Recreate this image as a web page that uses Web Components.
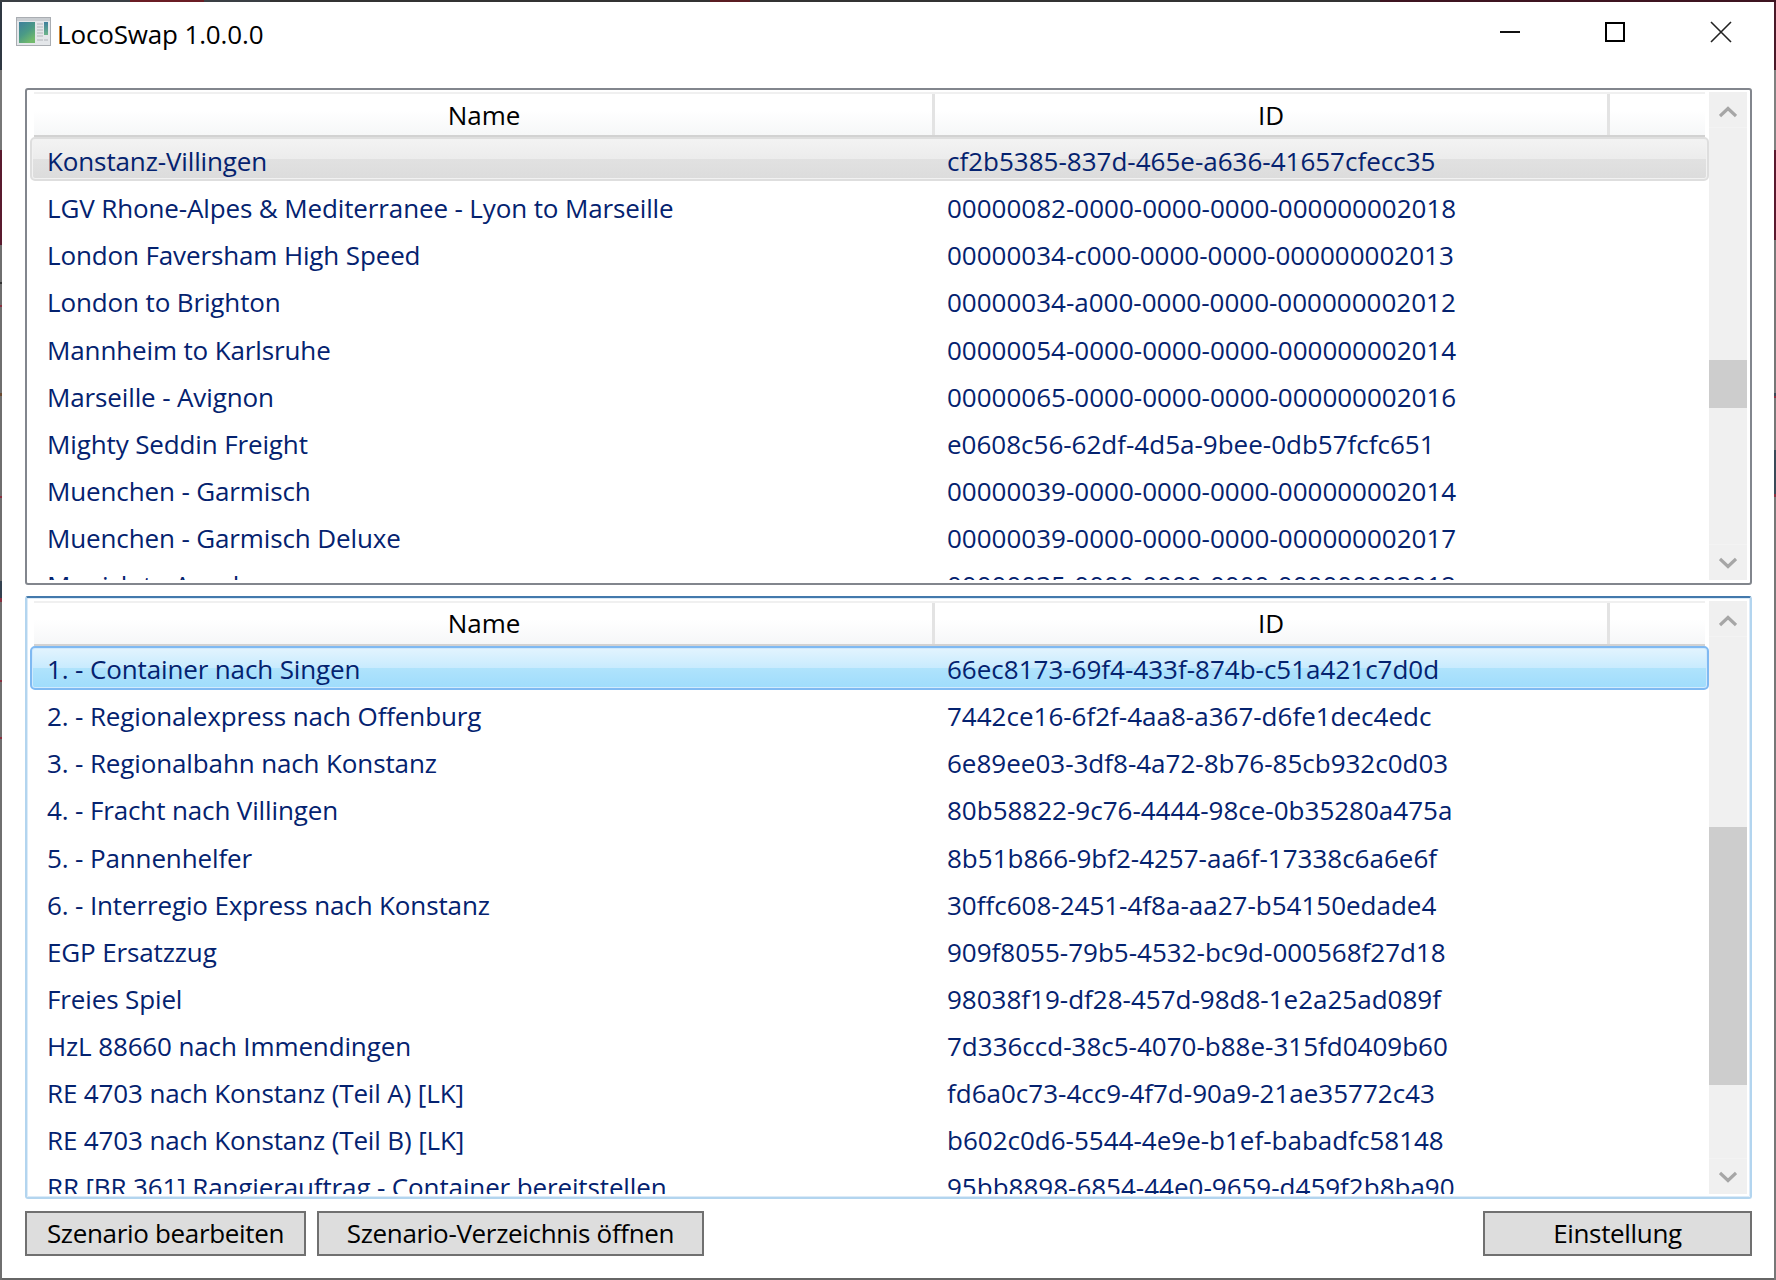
<!DOCTYPE html>
<html>
<head>
<meta charset="utf-8">
<title>LocoSwap</title>
<style>
  html, body { margin: 0; height: 100%; }
  body { background: #3a3a3a; font-family: "Open Sans", "Noto Sans", sans-serif; }
</style>
</head>
<body>
<app-window>
  <title-bar slot="title" text="LocoSwap 1.0.0.0"></title-bar>

  <list-panel style="height:497px" thumb-top="232" thumb-height="48">
    <list-row selected="gray" name="Konstanz-Villingen" uid="cf2b5385-837d-465e-a636-41657cfecc35"></list-row>
    <list-row name="LGV Rhone-Alpes &amp; Mediterranee - Lyon to Marseille" uid="00000082-0000-0000-0000-000000002018"></list-row>
    <list-row name="London Faversham High Speed" uid="00000034-c000-0000-0000-000000002013"></list-row>
    <list-row name="London to Brighton" uid="00000034-a000-0000-0000-000000002012"></list-row>
    <list-row name="Mannheim to Karlsruhe" uid="00000054-0000-0000-0000-000000002014"></list-row>
    <list-row name="Marseille - Avignon" uid="00000065-0000-0000-0000-000000002016"></list-row>
    <list-row name="Mighty Seddin Freight" uid="e0608c56-62df-4d5a-9bee-0db57fcfc651"></list-row>
    <list-row name="Muenchen - Garmisch" uid="00000039-0000-0000-0000-000000002014"></list-row>
    <list-row name="Muenchen - Garmisch Deluxe" uid="00000039-0000-0000-0000-000000002017"></list-row>
    <list-row name="Munich to Augsburg" uid="00000035-0000-0000-0000-000000002012"></list-row>
  </list-panel>

  <list-panel style="height:603px" focused thumb-top="190" thumb-height="258">
    <list-row selected="blue" name="1. - Container nach Singen" uid="66ec8173-69f4-433f-874b-c51a421c7d0d"></list-row>
    <list-row name="2. - Regionalexpress nach Offenburg" uid="7442ce16-6f2f-4aa8-a367-d6fe1dec4edc"></list-row>
    <list-row name="3. - Regionalbahn nach Konstanz" uid="6e89ee03-3df8-4a72-8b76-85cb932c0d03"></list-row>
    <list-row name="4. - Fracht nach Villingen" uid="80b58822-9c76-4444-98ce-0b35280a475a"></list-row>
    <list-row name="5. - Pannenhelfer" uid="8b51b866-9bf2-4257-aa6f-17338c6a6e6f"></list-row>
    <list-row name="6. - Interregio Express nach Konstanz" uid="30ffc608-2451-4f8a-aa27-b54150edade4"></list-row>
    <list-row name="EGP Ersatzzug" uid="909f8055-79b5-4532-bc9d-000568f27d18"></list-row>
    <list-row name="Freies Spiel" uid="98038f19-df28-457d-98d8-1e2a25ad089f"></list-row>
    <list-row name="HzL 88660 nach Immendingen" uid="7d336ccd-38c5-4070-b88e-315fd0409b60"></list-row>
    <list-row name="RE 4703 nach Konstanz (Teil A) [LK]" uid="fd6a0c73-4cc9-4f7d-90a9-21ae35772c43"></list-row>
    <list-row name="RE 4703 nach Konstanz (Teil B) [LK]" uid="b602c0d6-5544-4e9e-b1ef-babadfc58148"></list-row>
    <list-row name="RR [BR 361] Rangierauftrag - Container bereitstellen" uid="95bb8898-6854-44e0-9659-d459f2b8ba90"></list-row>
  </list-panel>

  <button-bar>
    <push-button style="width:281px">Szenario bearbeiten</push-button>
    <push-button style="width:387px">Szenario-Verzeichnis öffnen</push-button>
    <push-button slot="end" style="width:269px">Einstellung</push-button>
  </button-bar>
</app-window>

<script>
// the desktop behind the window only shows through its 2px border
const leftEdge = "linear-gradient(#2f3842 0 70px, #777 70px 150px, #5a1a2e 150px 245px, #6f6f6f 245px 282px, #333 282px 284px, #6f6f6f 284px 305px, #8a3040 305px 307px, #6f6f6f 307px 393px, #6b4a30 393px 396px, #6f6f6f 396px 496px, #8a3040 496px 498px, #6f6f6f 498px 581px, #33414f 581px 598px, #8a3040 598px 602px, #6f6f6f 602px 680px, #8a3040 680px 682px, #6f6f6f 682px 737px, #8a3040 737px 739px, #6f6f6f 739px)";
const rightEdge = "linear-gradient(#4a1a28 0 70px, #808080 70px 150px, #5a1a2e 150px 240px, #777 240px 393px, #3a4a58 393px 396px, #8a3040 396px 398px, #777 398px 450px, #3a4a58 450px 494px, #8a3040 494px 497px, #777 497px)";
const topEdge = "linear-gradient(90deg, #3a3f44 0 130px, #6a1c24 130px 204px, #3a3f44 204px 270px, #333 270px 710px, #5a1c22 710px 750px, #333 750px 1380px, #3d1420 1380px)";

class AppWindow extends HTMLElement {
    constructor() {
        super();
        this.attachShadow({mode: "open"}).innerHTML = `
        <style>
        :host {
            display: block;
            box-sizing: border-box;
            width: 1776px;
            height: 1280px;
            padding: 2px;
            background: ${topEdge} 0 0 / 100% 2px no-repeat,
                        ${leftEdge} 0 0 / 2px 100% no-repeat,
                        ${rightEdge} 100% 0 / 2px 100% no-repeat,
                        #666;
            color: #000;
        }
        .frame {
            box-sizing: border-box;
            height: 100%;
            background: #fff;
            padding: 0 22px 0 23px;
            display: flex;
            flex-direction: column;
        }
        .lists {
            display: flex;
            flex-direction: column;
            gap: 11px;
        }
        </style>
        <div class="frame">
            <slot name="title"></slot>
            <div class="lists"><slot></slot></div>
        </div>`;
    }
}

class TitleBar extends HTMLElement {
    constructor() {
        super();
        this.attachShadow({mode: "open"}).innerHTML = `
        <style>
        :host {
            display: flex;
            align-items: flex-start;
            height: 86px;
            margin: 0 -22px 0 -23px;
            flex: none;
        }
        .icon { margin: 15px 5px 0 14px; flex: none; }
        .text {
            font-size: 26px;
            line-height: 36px;
            margin-top: 14px;
            letter-spacing: -0.15px;
            flex: 1;
        }
        .controls { display: flex; flex: none; margin-right: 2px; }
        .controls svg { display: block; }
        </style>
        <svg class="icon" width="36" height="30" viewBox="0 0 36 30">
            <defs>
                <linearGradient id="pane" x1="0" y1="0" x2="0.6" y2="1">
                    <stop offset="0" stop-color="#3f7f9c"/>
                    <stop offset="0.55" stop-color="#4a9a86"/>
                    <stop offset="1" stop-color="#72ba6c"/>
                </linearGradient>
                <linearGradient id="bar" x1="0" y1="0" x2="0" y2="1">
                    <stop offset="0" stop-color="#3f7f9c"/>
                    <stop offset="1" stop-color="#6db58a"/>
                </linearGradient>
            </defs>
            <rect x="0.5" y="0.5" width="34" height="28" fill="#e4e7ea" stroke="#a9adb2"/>
            <rect x="1" y="1" width="33" height="3" fill="#c9cdd1"/>
            <rect x="3" y="5" width="16" height="21" fill="url(#pane)"/>
            <rect x="28" y="5" width="4" height="13" fill="url(#bar)"/>
            <path d="M21 7h6M21 10h6M21 13h6M21 16h6M21 19h6M21 23h6M28 23h4" stroke="#c2c6ca" stroke-width="1.4"/>
        </svg>
        <span class="text"></span>
        <div class="controls">
            <svg width="105" height="86" viewBox="0 0 105 86">
                <rect x="4" y="29" width="20" height="2" fill="#111"/>
            </svg>
            <svg width="106" height="86" viewBox="0 0 106 86">
                <rect x="5" y="21" width="18" height="18" fill="none" stroke="#000" stroke-width="2"/>
            </svg>
            <svg width="65" height="86" viewBox="0 0 65 86">
                <path d="M4 20 L24 40 M24 20 L4 40" stroke="#222" stroke-width="1.6" fill="none"/>
            </svg>
        </div>`;
        this.shadowRoot.querySelector(".text").textContent = this.getAttribute("text");
    }
}

class ListPanel extends HTMLElement {
    constructor() {
        super();
        this.attachShadow({mode: "open"}).innerHTML = `
        <style>
        :host {
            display: flex;
            box-sizing: border-box;
            flex: none;
            background: #fff;
            border: 2px solid #82868d;
            border-radius: 3px;
            padding: 2px 3px 3px 0;
            overflow: hidden;
            --row-line: 44px;
            --head-line: 42px;
        }
        :host([focused]) {
            border-color: #b3d5ef;
            border-top-color: #4379ac;
            padding-top: 3px;
            box-shadow: inset 0 0 0 1px #dcebf8;
            --row-line: 43.5px;
            --head-line: 41px;
        }
        .main {
            flex: 1;
            min-width: 0;
            overflow: hidden;
            display: flex;
            flex-direction: column;
        }
        .head {
            flex: none;
            display: grid;
            grid-template-columns: 898px 3px 672px 3px 95px;
            margin-left: 7px;
            width: 1671px;
            height: 43px;
            box-sizing: border-box;
            border-top: 2px solid #f0f0f0;
            background: linear-gradient(#fff 40%, #f6f7f8);
            font-size: 26px;
            line-height: var(--head-line);
            text-align: center;
            color: #000;
        }
        .head span:first-child { padding-left: 2px; }
        .sep { background: #e3e3e3; }
        .rule { flex: none; height: 2px; margin-left: 7px; width: 1671px; background: #d2d2d2; }
        .rows { flex: 1; overflow: hidden; }
        </style>
        <div class="main">
            <div class="head"><span>Name</span><i class="sep"></i><span>ID</span><i class="sep"></i><span></span></div>
            <div class="rule"></div>
            <div class="rows"><slot></slot></div>
        </div>
        <scroll-bar thumb-top="${this.getAttribute("thumb-top")}" thumb-height="${this.getAttribute("thumb-height")}"></scroll-bar>`;
    }
}

class ScrollBar extends HTMLElement {
    constructor() {
        super();
        this.attachShadow({mode: "open"}).innerHTML = `
        <style>
        :host {
            display: flex;
            flex-direction: column;
            flex: none;
            width: 38px;
            background: #f0f0f0;
        }
        .btn { flex: none; height: 35px; display: flex; align-items: center; justify-content: center; }
        .btn.up { box-sizing: border-box; padding-top: 4px; }
        .track { flex: 1; min-height: 0; border-top: 1px solid #f3f3f3; border-bottom: 1px solid #f3f3f3; }
        .thumb { background: #cdcdcd; }
        </style>
        <div class="btn up"><svg width="18" height="12" viewBox="0 0 18 12"><path d="M1 10 L9 2.5 L17 10" fill="none" stroke="#a6a6a6" stroke-width="3.2"/></svg></div>
        <div class="track"><div class="thumb"></div></div>
        <div class="btn"><svg width="18" height="12" viewBox="0 0 18 12"><path d="M1 2 L9 9.5 L17 2" fill="none" stroke="#a6a6a6" stroke-width="3.2"/></svg></div>`;
    }
    static get observedAttributes() {
        return ["thumb-top", "thumb-height"];
    }
    attributeChangedCallback(name, old, value) {
        const thumb = this.shadowRoot.querySelector(".thumb");
        if (name === "thumb-top") thumb.style.marginTop = value + "px";
        else thumb.style.height = value + "px";
    }
}

class ListRow extends HTMLElement {
    constructor() {
        super();
        this.attachShadow({mode: "open"}).innerHTML = `
        <style>
        :host {
            display: grid;
            grid-template-columns: 900px 1fr;
            box-sizing: border-box;
            height: 44px;
            margin: 0 0 3.125px 3px;
            padding-left: 15px;
            border: 2px solid transparent;
            border-radius: 5px;
            font-size: 26px;
            line-height: var(--row-line, 44px);
            color: #04226f;
            white-space: nowrap;
        }
        :host([selected="gray"]) {
            border-color: #dedede;
            box-shadow: inset 0 0 0 1px #f2f2f2;
            background: linear-gradient(#f3f3f3, #ececec 50%, #e1e1e1 51%, #dcdcdc) padding-box;
        }
        :host([selected="blue"]) {
            border-color: #7fb9f2;
            box-shadow: inset 0 0 0 1px #cfeafd;
            background: linear-gradient(#e3f4fe, #c8ebfe 50%, #afe3fc 51%, #9fdcfc) padding-box;
        }
        span { display: block; height: 40px; }
        .name { letter-spacing: -0.13px; }
        </style>
        <span class="name"></span><span class="uid"></span>`;
        this.shadowRoot.querySelector(".name").textContent = this.getAttribute("name");
        this.shadowRoot.querySelector(".uid").textContent = this.getAttribute("uid");
    }
}

class ButtonBar extends HTMLElement {
    constructor() {
        super();
        this.attachShadow({mode: "open"}).innerHTML = `
        <style>
        :host {
            display: flex;
            gap: 11px;
            margin-top: 1px;
            flex: none;
        }
        .end { margin-left: auto; display: flex; }
        </style>
        <slot></slot>
        <div class="end"><slot name="end"></slot></div>`;
    }
}

class PushButton extends HTMLElement {
    constructor() {
        super();
        this.attachShadow({mode: "open"}).innerHTML = `
        <style>
        :host {
            display: block;
            box-sizing: border-box;
            height: 45px;
            background: #dddddd;
            border: 2px solid #707070;
            font-size: 26px;
            line-height: 41px;
            letter-spacing: -0.33px;
            text-align: center;
            color: #000;
            white-space: nowrap;
        }
        </style>
        <slot></slot>`;
    }
}

customElements.define("scroll-bar", ScrollBar);
customElements.define("app-window", AppWindow);
customElements.define("title-bar", TitleBar);
customElements.define("list-panel", ListPanel);
customElements.define("list-row", ListRow);
customElements.define("button-bar", ButtonBar);
customElements.define("push-button", PushButton);
</script>
</body>
</html>
